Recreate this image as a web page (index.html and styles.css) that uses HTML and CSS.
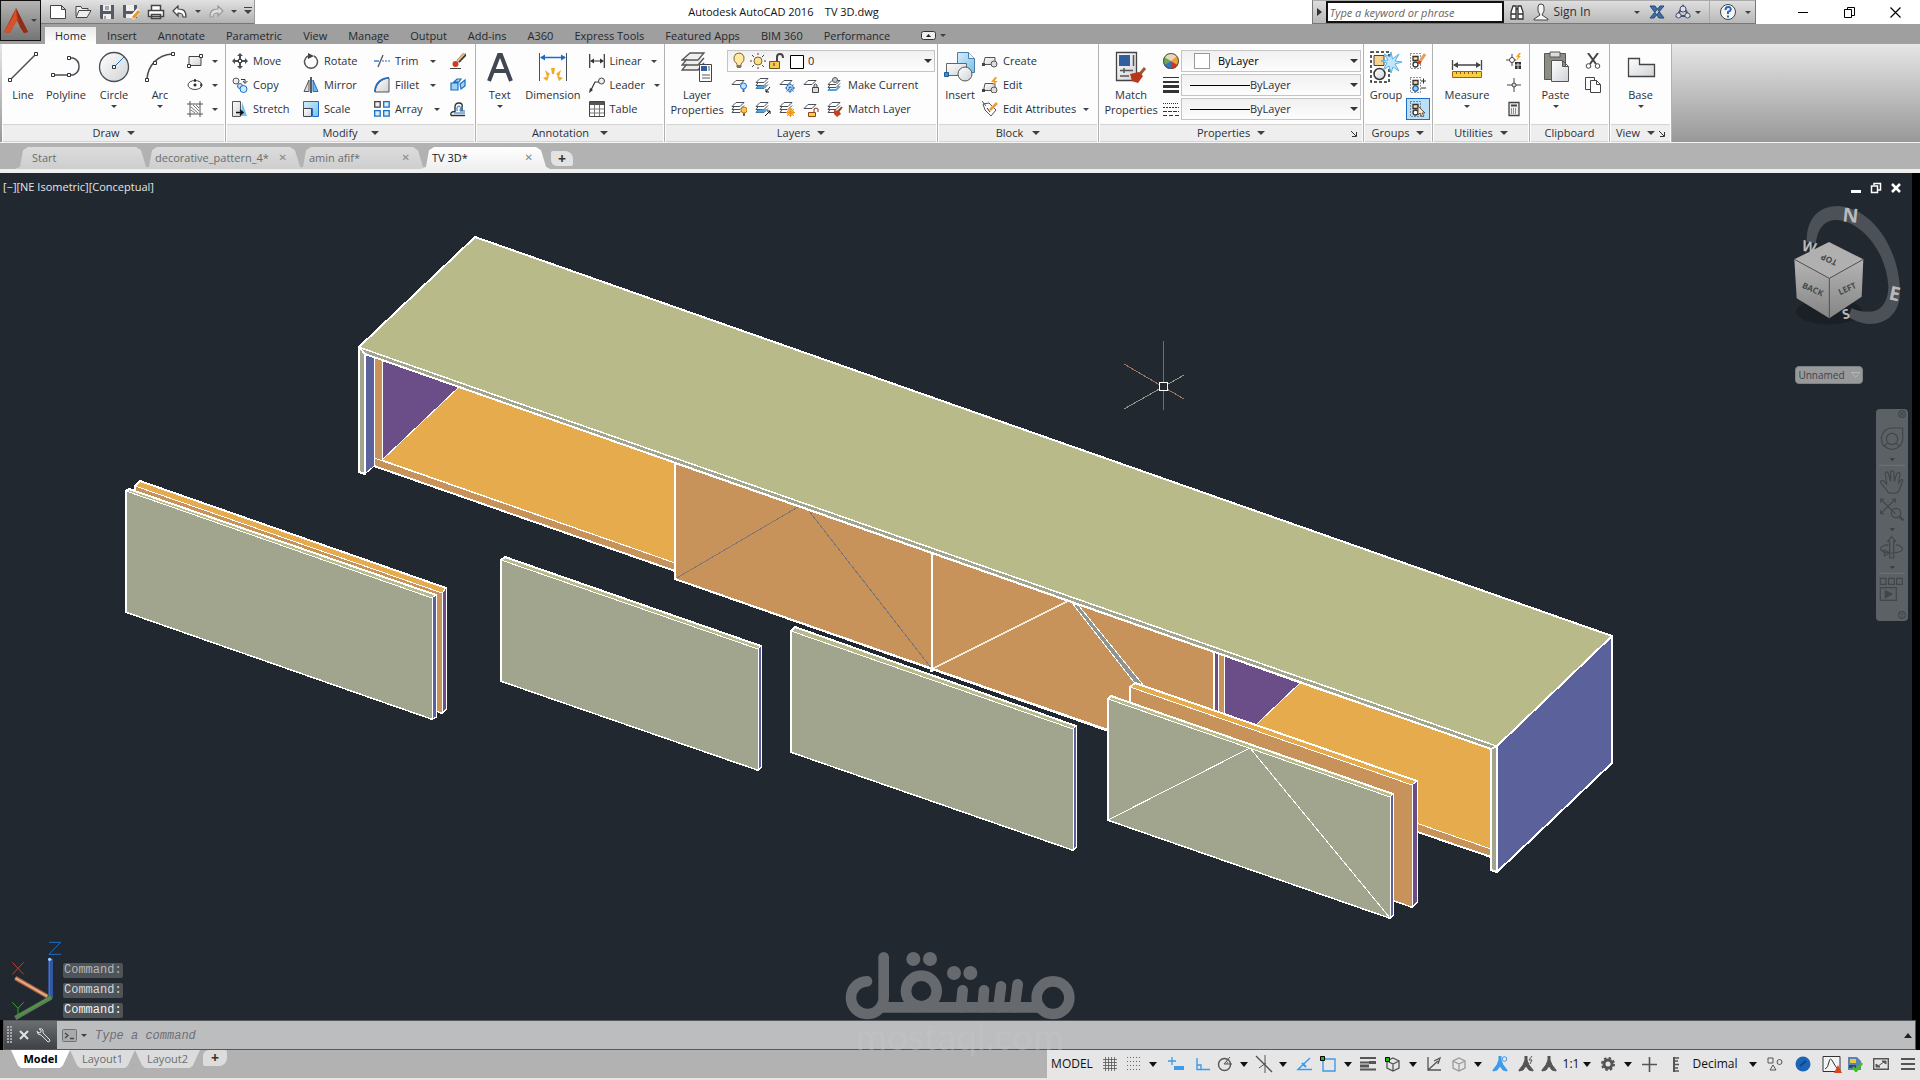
FILE: index.html
```html
<!DOCTYPE html>
<html lang="en">
<head>
<meta charset="utf-8">
<title>Autodesk AutoCAD 2016 - TV 3D.dwg</title>
<link rel="stylesheet" href="styles.css">
</head>
<body>
<svg class="defs" aria-hidden="true">
  <defs>
    <linearGradient id="g-metal" x1="0" y1="0" x2="1" y2="1"><stop offset="0" stop-color="#fff"/><stop offset="1" stop-color="#cfd2d6"/></linearGradient>
    <linearGradient id="g-blue" x1="0" y1="0" x2="1" y2="1"><stop offset="0" stop-color="#d5edfa"/><stop offset="1" stop-color="#7cc0ea"/></linearGradient>
    <symbol id="stack" viewBox="0 0 16 16"><path d="M5 1.500h8l-4 4H1zM3.500 5L1 8.500h8l4-4M3.500 8L1 11.500h8l4-4" fill="#fff" stroke="#4a4f57"/></symbol>
    <symbol id="sheet" viewBox="0 0 16 16"><path d="M5 3.500h8l-4 4H1z" fill="#fff" stroke="#4a4f57"/></symbol>
    <symbol id="groupbox" viewBox="0 0 16 16"><path d="M.5.500h10v15H.5z" fill="none" stroke="#333" stroke-dasharray="1 2"/><path d="M3 3.500h5v4H3z" fill="#fbdc9e" stroke="#333" stroke-width="1.300"/><circle cx="5.500" cy="11.500" r="2.500" fill="#fff" stroke="#333" stroke-width="1.300"/></symbol>
    <symbol id="block" viewBox="0 0 16 16"><path d="M3 4.500h10v7H1.500z" fill="url(#g-metal)" stroke="#555"/><circle cx="12" cy="11" r="3" fill="#ddd" stroke="#555"/><path d="M0 10h3v3H0z" fill="#444"/></symbol>
    <symbol id="compass" viewBox="0 0 16 16"><path d="M7 0h2v4l2 5 4 5v1l-4-1-3-4-3 4-4 1v-1l4-5 2-5z" fill="currentColor" stroke="currentColor"/></symbol>
    <symbol id="cube" viewBox="0 0 16 16"><path d="M8 2l6 3v7l-6 3-6-3V5zM2 5l6 3 6-3M8 8v7" fill="none" stroke="currentColor" stroke-width="1.300"/></symbol>
  </defs>
</svg>

<header class="top">
  <button class="app-button" aria-label="Application menu">
    <svg width="24" height="26" viewBox="0 0 24 26"><path d="M12 0L0 24l6 1 3-6h7l4 6 4-1z" fill="#b5381b"/><path d="M12 0L9 9 0 24l6 1 4-8 3-3z" fill="#d8502a"/><path d="M12 0l4 19 4 6 4-1z" fill="#8f2b18"/><path d="M9 19h7l-3-6z" fill="#8d8d8d"/></svg>
    <i class="arrow"></i>
  </button>
  <div class="title-bar">
    <div class="quick-access">
      <button aria-label="New"><svg width="18" height="16" viewBox="0 0 18 16"><path d="M1.500 1.500h11l4 4v9h-15zM12.500 1.500v4h4" fill="#fff" stroke="#444"/></svg></button>
      <button aria-label="Open"><svg width="18" height="16" viewBox="0 0 18 16"><path d="M2 12V2.500h5l1 2h6v2M2 13.500L5 6.500h12l-4 7z" fill="#eee" stroke="#444"/></svg></button>
      <button aria-label="Save"><svg width="16" height="16" viewBox="0 0 16 16"><path d="M1 1h14v14H2l-1-1z" fill="#555b64"/><path d="M4 1h8v6H4zM4 10h8v5H4z" fill="#eee"/><path d="M6 3h4M6 5h4M6 12v3" stroke="#555b64"/></svg></button>
      <button aria-label="Save As"><svg width="18" height="16" viewBox="0 0 18 16"><path d="M1 1h14v13H2l-1-1z" fill="#555b64"/><path d="M4 1h8v6H4zM4 10h8v4H4z" fill="#eee"/><path d="M17 6l-7 8" stroke="#fff" stroke-width="5"/><path d="M17 7l-6 7" stroke="#eb9a2a" stroke-width="3"/></svg></button>
      <button aria-label="Plot"><svg width="18" height="16" viewBox="0 0 18 16"><path d="M4.500 6V1.500h9V6M1.500 6.500h15v6h-15zM4.500 10.500h9v4h-9z" fill="#fff" stroke="#444" stroke-width="1.500"/></svg></button>
      <button aria-label="Undo"><svg width="16" height="14" viewBox="0 0 16 14"><path d="M1 6l5-5v3c6 0 8 2 8 8h-3c0-3-1-4-5-4v3z" fill="#fff" stroke="#444" stroke-width="1.200"/></svg></button>
      <i class="arrow"></i>
      <button aria-label="Redo"><svg width="16" height="14" viewBox="0 0 16 14"><path d="M15 6l-5-5v3C4 4 2 6 2 12h3c0-3 1-4 5-4v3z" fill="#ddd" stroke="#999" stroke-width="1.200"/></svg></button>
      <i class="arrow"></i>
      <i class="arrow wide bar"></i>
    </div>
    <div class="title">Autodesk AutoCAD 2016 &nbsp;&nbsp; TV 3D.dwg</div>
    <div class="info-center">
      <button class="expand" aria-label="Collapse search"><svg width="5" height="8" viewBox="0 0 5 8"><path d="M0 0l5 4-5 4z" fill="#333"/></svg></button>
      <input type="text" placeholder="Type a keyword or phrase" aria-label="Search">
      <button class="w24" aria-label="Find"><svg width="16" height="16" viewBox="0 0 16 16"><path d="M2 15V8l2-6h3v13zM9 15V2h3l2 6v7zM7 5h2M2 10h5M9 10h5" fill="#fff" stroke="#333" stroke-width="1.300"/></svg></button>
      <button class="sign"><svg width="16" height="18" viewBox="0 0 16 18"><path d="M5 8V4q0-3 3-3t3 3v4l-2 4 6 4v1H1v-1l6-4z" fill="#f5f5f5" stroke="#444"/></svg>Sign In<i class="arrow"></i></button>
      <button class="w24" aria-label="Exchange"><svg width="16" height="16" viewBox="0 0 16 16"><path d="M1 2h5l9 12h-5zM15 2h-4L1 14h4z" fill="#3b6eaf" stroke="#2b4a73"/></svg></button>
      <button class="w24" aria-label="A360"><svg width="16" height="16" viewBox="0 0 16 16"><path d="M8 2L2 12h12z" fill="none" stroke="#44546c" stroke-width="2"/><circle cx="8" cy="5" r="3" fill="#dde" stroke="#44546c"/><circle cx="3.500" cy="11.500" r="2.500" fill="#dde" stroke="#44546c"/><circle cx="12.500" cy="11.500" r="2.500" fill="#dde" stroke="#44546c"/></svg></button>
      <i class="arrow"></i>
      <button class="w32 ruled" aria-label="Help"><svg width="18" height="18" viewBox="0 0 18 18"><circle cx="9" cy="9" r="7.500" fill="#f5f5f5" stroke="#444"/><path d="M6.500 7q0-3 2.700-3t2.600 2.500Q11.500 8 9 9v2M9 12.500v2" fill="none" stroke="#2468b4" stroke-width="2"/></svg></button>
      <i class="arrow"></i>
    </div>
    <div class="window-buttons">
      <button aria-label="Minimize"><svg width="10" height="10" viewBox="0 0 10 10"><path d="M0 5.500h10" stroke="#000"/></svg></button>
      <button aria-label="Restore"><svg width="11" height="11" viewBox="0 0 11 11"><path d="M.5 2.500h7v8h-7zM3.500 2.500v-2h7v8h-3" fill="none" stroke="#000"/></svg></button>
      <button aria-label="Close"><svg width="11" height="11" viewBox="0 0 11 11"><path d="M.5.500l10 10M10.500.500l-10 10" stroke="#000" stroke-width="1.200"/></svg></button>
    </div>
  </div>
  <nav class="ribbon-tabs">
    <button class="active">Home</button><button>Insert</button><button>Annotate</button><button>Parametric</button><button>View</button><button>Manage</button><button>Output</button><button>Add-ins</button><button>A360</button><button>Express Tools</button><button>Featured Apps</button><button>BIM 360</button><button>Performance</button>
    <span class="minimize"><svg width="15" height="9" viewBox="0 0 15 9"><rect x=".5" y=".5" width="14" height="8" rx="2" fill="#eee" stroke="#333"/><path d="M5 6l2.500-3L10 6z" fill="#222"/></svg><i class="arrow"></i></span>
  </nav>
</header>

<main class="ribbon">
  <section class="panel p-draw">
    <div class="body">
      <button class="big w40"><svg width="32" height="32" viewBox="0 0 32 32"><path d="M4 28L28 4" stroke="#4a4f57" stroke-width="1.500"/><path d="M1.500 27.500h3v3h-3zM27.500 1.500h3v3h-3z" fill="#fff" stroke="#333"/></svg>Line</button>
      <button class="big w48"><svg width="32" height="32" viewBox="0 0 32 32"><path d="M2 24h17h4a9 9 0 0 0 0-17h-5" fill="none" stroke="#4a4f57" stroke-width="1.500"/><path d="M1.500 22.500h3v3h-3zM17.500 22.500h3v3h-3zM17.500 5.500h3v3h-3z" fill="#fff" stroke="#333"/></svg>Polyline</button>
      <button class="big w48"><svg width="32" height="32" viewBox="0 0 32 32"><circle cx="16" cy="16" r="14.500" fill="url(#g-metal)" stroke="#4a4f57" stroke-width="1.300"/><path d="M17 15l9-9" stroke="#1a6fc4"/><path d="M14.500 14.500h3v3h-3z" fill="#fff" stroke="#333"/></svg>Circle<i class="arrow"></i></button>
      <button class="big w44"><svg width="32" height="32" viewBox="0 0 32 32"><path d="M3 28C4 14 14 4 28 3" fill="none" stroke="#4a4f57" stroke-width="1.500"/><path d="M1.500 27.500h3v3h-3zM9.500 10.500h3v3h-3zM27.500 1.500h3v3h-3z" fill="#fff" stroke="#333"/></svg>Arc<i class="arrow"></i></button>
      <div class="rows">
        <button class="small" aria-label="Rectangle"><svg width="16" height="16" viewBox="0 0 16 16"><path d="M2 3.500h12v9H2z" fill="url(#g-metal)" stroke="#444"/><path d="M.5 11.500h3v3h-3zM12.500 1.500h3v3h-3z" fill="#fff" stroke="#333"/></svg><i class="arrow"></i></button>
        <button class="small" aria-label="Ellipse"><svg width="16" height="16" viewBox="0 0 16 16"><ellipse cx="8" cy="8" rx="7" ry="4.500" fill="#fff" stroke="#444"/><path d="M6.500 8h3M8 6.500v3M8 2v3M14 6.500v3" stroke="#222" stroke-width="1.500"/></svg><i class="arrow"></i></button>
        <button class="small" aria-label="Hatch"><svg width="16" height="16" viewBox="0 0 16 16"><path d="M3 0v16M13 0v16M0 3h16M0 13h16" stroke="#555"/><path d="M4 6l7 6M4 9l4 3M6 4l6 6M9 4l3 3" stroke="#777"/></svg><i class="arrow"></i></button>
      </div>
    </div>
    <footer>Draw<i class="arrow wide"></i></footer>
  </section>

  <section class="panel p-modify">
    <div class="body">
      <div class="rows w72">
        <button class="small"><svg width="16" height="16" viewBox="0 0 16 16"><path d="M8 0l3 3H5zM8 16l3-3H5zM0 8l3-3v6zM16 8l-3-3v6zM7 3h2v3H7zM7 10h2v3H7zM3 7h3v2H3zM10 7h3v2h-3z" fill="#4a4f57"/><path d="M6.500 6.500h3v3h-3z" fill="#fff" stroke="#333"/></svg>Move</button>
        <button class="small"><svg width="16" height="16" viewBox="0 0 16 16"><circle cx="4" cy="4" r="3" fill="#eee" stroke="#555"/><circle cx="8" cy="9" r="2.500" fill="#cde" stroke="#1a6fc4"/><circle cx="11.500" cy="12" r="3.500" fill="#cfe8f8" stroke="#1a6fc4"/><path d="M9 2.500h4v3M11 4l2 2.500L15.500 4" fill="none" stroke="#333"/></svg>Copy</button>
        <button class="small"><svg width="16" height="16" viewBox="0 0 16 16"><path d="M10 1l5 14H9z" fill="#7cc0ea"/><path d="M.5.500h8v15h-8z" fill="url(#g-metal)" stroke="#555"/><path d="M4 11.500h6M8 9l3 2.500L8 14" fill="none" stroke="#111" stroke-width="1.500"/></svg>Stretch</button>
      </div>
      <div class="rows w72">
        <button class="small"><svg width="16" height="16" viewBox="0 0 16 16"><path d="M5 3a6.500 6.500 0 1 0 6 0" fill="none" stroke="#555" stroke-width="1.500"/><path d="M5 0l6 3-6 3z" fill="#444"/></svg>Rotate</button>
        <button class="small"><svg width="16" height="16" viewBox="0 0 16 16"><path d="M6 3v11.500H1z" fill="#ddd" stroke="#555"/><path d="M10 3v11.500h5z" fill="#6db9ec" stroke="#1a6fc4"/><path d="M8 0v16" stroke="#222" stroke-width="1.500"/></svg>Mirror</button>
        <button class="small"><svg width="16" height="16" viewBox="0 0 16 16"><path d="M.5.500h15v15h-6v-8h-9z" fill="url(#g-blue)" stroke="#1a6fc4"/><path d="M.5 7.500h8v8h-8z" fill="url(#g-metal)" stroke="#444"/></svg>Scale</button>
      </div>
      <div class="rows w76">
        <button class="small"><svg width="16" height="16" viewBox="0 0 16 16"><path d="M0 8h5" stroke="#1a6fc4" stroke-width="1.300"/><path d="M8 8h8" stroke="#1a6fc4" stroke-dasharray="2 1"/><path d="M4 14L9 2" stroke="#555" stroke-width="1.300"/></svg>Trim<i class="arrow"></i></button>
        <button class="small"><svg width="16" height="16" viewBox="0 0 16 16"><path d="M15 1v14H1C2 7 7 2 15 1z" fill="url(#g-metal)" stroke="#555"/><path d="M.7 15C1 6 7 1 15 .700" fill="none" stroke="#1a6fc4" stroke-width="1.500"/></svg>Fillet<i class="arrow"></i></button>
        <button class="small"><svg width="16" height="16" viewBox="0 0 16 16"><path d="M.7.700h5.500v5.500H.7z" fill="#eee" stroke="#444" stroke-width="1.300"/><path d="M9.700.700h5.500v5.500H9.700zM.7 9.700h5.500v5.500H.7zM9.700 9.700h5.500v5.500H9.700z" fill="#d5edfa" stroke="#1a6fc4" stroke-width="1.300"/></svg>Array<i class="arrow"></i></button>
      </div>
      <div class="rows">
        <button class="small" aria-label="Erase"><svg width="16" height="16" viewBox="0 0 16 16"><path d="M0 15.500h11" stroke="#444"/><path d="M15.500.500L8 8.500" stroke="#333" stroke-width="4"/><path d="M15 0L7.500 8" stroke="#f0c088" stroke-width="2"/><circle cx="5.500" cy="11" r="3" fill="#c8401c"/></svg></button>
        <button class="small" aria-label="Explode"><svg width="16" height="16" viewBox="0 0 16 16"><path d="M1 6h7v7H1zM4 5l3-3h4L9 5zM10 7l5-4v6l-4 3z" fill="#9fd2f2" stroke="#1a6fc4" stroke-width="1.200"/></svg></button>
        <button class="small" aria-label="Offset"><svg width="16" height="16" viewBox="0 0 16 16"><path d="M1 14.500h14M1 14.500q-1-4 4-4V6q0-4 4-4t3 4v4" fill="none" stroke="#333" stroke-width="1.400"/><path d="M4 12h11M7 10V7q0-2 2-2t1 5h5" fill="none" stroke="#1a6fc4"/></svg></button>
      </div>
    </div>
    <footer>Modify<i class="arrow wide"></i></footer>
  </section>

  <section class="panel p-annotation">
    <div class="body">
      <button class="big w44"><svg width="32" height="32" viewBox="0 0 32 32"><path d="M5 30L15 4h2l10 26M9 20h14" fill="none" stroke="#414750" stroke-width="4"/></svg>Text<i class="arrow"></i></button>
      <button class="big w64"><svg width="32" height="32" viewBox="0 0 32 32"><path d="M2.500 2v28M29.500 2v28" stroke="#4a4f57"/><path d="M4 6.500h24" stroke="#1a6fc4" stroke-width="1.500"/><path d="M3 6.500l5-3v6zM29 6.500l-5-3v6z" fill="#1a6fc4"/><g fill="#f2aa2c"><path d="M14 17h4l-1 6h-2zM8 19l5 4-3 3zM24 19l-5 4 3 3zM6 27l6-2-2 5zM26 27l-6-2 2 5z"/></g></svg>Dimension</button>
      <div class="rows">
        <button class="small"><svg width="16" height="16" viewBox="0 0 16 16"><path d="M.7 1v14M15.300 1v14M2 8h12" stroke="#333" stroke-width="1.200"/><path d="M1 8l4-2.500v5zM15 8l-4-2.500v5z" fill="#333"/></svg>Linear<i class="arrow"></i></button>
        <button class="small"><svg width="16" height="16" viewBox="0 0 16 16"><path d="M2 13l4-8h4" fill="none" stroke="#333" stroke-width="1.200"/><path d="M0 16l1-5 3 2z" fill="#333"/><circle cx="12.500" cy="4" r="3" fill="#eee" stroke="#444"/></svg>Leader<i class="arrow"></i></button>
        <button class="small"><svg width="16" height="16" viewBox="0 0 16 16"><path d="M.5.500h15v15H.5z" fill="#fff" stroke="#444"/><path d="M1 1h14v3H1z" fill="#555"/><path d="M1 8h14M1 12h14M5.500 4v11M10.500 4v11" stroke="#777"/></svg>Table</button>
      </div>
    </div>
    <footer>Annotation<i class="arrow wide"></i></footer>
  </section>

  <section class="panel p-layers">
    <div class="body">
      <button class="big w60"><svg width="32" height="32" viewBox="0 0 32 32"><path d="M9 2h14l-6 7H1zM6 8l-5 6h16l6-7M6 13l-5 6h16l6-7" fill="#eee" stroke="#555" stroke-width="1.300"/><path d="M18.500 13.500h12v17h-12z" fill="#fff" stroke="#444"/><path d="M20 15h6v5h-6z" fill="#2f5f9f"/><path d="M28 15v5M21 24h8M21 27h8" stroke="#555"/></svg><span>Layer<br>Properties</span></button>
      <div class="rows">
        <label class="combo layer-combo">
          <svg width="72" height="18" viewBox="0 0 72 18"><path d="M5 12Q1 9 2 5t5-4q4 0 5 4 1 4-3 7v3H5z" fill="#ffe9a5" stroke="#8a6a2c"/><path d="M5 13h4v3H5z" fill="#777"/><circle cx="26" cy="9" r="4" fill="#ffe08a" stroke="#7a6330"/><path d="M26 1v2M26 15v2M18 9h2M32 9h2M20 3l2 2M30 13l2 2M32 3l-2 2M22 13l-2 2" stroke="#444"/><path d="M37.500 9.500h10v7h-10z" fill="#f8c950" stroke="#6f5320"/><path d="M45 9V5q0-3 3-3t3 4" fill="none" stroke="#444" stroke-width="2"/><path d="M42 11v3" stroke="#333"/><path d="M58.500 3.500h13v13h-13z" fill="#fff" stroke="#000"/></svg>
          <select aria-label="Layer"><option>0</option></select>
        </label>
        <div class="icon-row">
          <button aria-label="Off"><svg width="16" height="16" viewBox="0 0 16 16"><use href="#sheet"/><circle cx="12.500" cy="9" r="3" fill="#bfe3f8" stroke="#1a6fc4"/><path d="M11.500 12h2v3h-2z" fill="#666"/></svg></button>
          <button aria-label="Isolate"><svg width="16" height="16" viewBox="0 0 16 16"><use href="#stack"/><path d="M3 9l-2 2.500h8L12 8z" fill="#4aa6e6"/><path d="M15 10l-4 5M11 12v3h3" stroke="#111" fill="none"/></svg></button>
          <button aria-label="Freeze"><svg width="16" height="16" viewBox="0 0 16 16"><use href="#sheet"/><circle cx="11" cy="11" r="3.500" fill="#fff" stroke="#1a6fc4"/><path d="M11 6v10M6 11h10M7.500 7.500l7 7M14.500 7.500l-7 7" stroke="#1a6fc4" stroke-dasharray="2 1"/></svg></button>
          <button aria-label="Lock"><svg width="16" height="16" viewBox="0 0 16 16"><use href="#sheet"/><path d="M9.500 10.500h6v5h-6zM11 10V8q1.500-2 3 0v2" fill="#ddd" stroke="#444"/></svg></button>
          <button class="small"><svg width="16" height="16" viewBox="0 0 16 16"><use href="#stack" y="2"/><path d="M2 12l-1 2h8l4-5h-2l-2 3z" fill="#4aa6e6"/><circle cx="8" cy="3" r="2.500" fill="#ccc" stroke="#555"/></svg>Make Current</button>
        </div>
        <div class="icon-row">
          <button aria-label="On"><svg width="16" height="16" viewBox="0 0 16 16"><use href="#stack"/><circle cx="13" cy="9" r="3" fill="#ffc24a" stroke="#c07a12"/><path d="M12 12h2v3h-2z" fill="#666"/></svg></button>
          <button aria-label="Unisolate"><svg width="16" height="16" viewBox="0 0 16 16"><use href="#stack"/><path d="M3 9l-2 2.500h8L12 8z" fill="#4aa6e6"/><path d="M10 15l5-5M12 10h3v3" stroke="#111" fill="none"/></svg></button>
          <button aria-label="Thaw"><svg width="16" height="16" viewBox="0 0 16 16"><use href="#stack"/><circle cx="11.500" cy="11.500" r="3" fill="#ffd060" stroke="#e08c1c"/><path d="M11.500 7v9M7 11.500h9M8 8l7 7M15 8l-7 7" stroke="#e99a20"/></svg></button>
          <button aria-label="Unlock"><svg width="16" height="16" viewBox="0 0 16 16"><use href="#sheet"/><path d="M5.500 11.500h7v4h-7z" fill="#ffc850" stroke="#8a4a18"/><path d="M11 11V8q2-2 4 0v3" fill="none" stroke="#8a2a18"/></svg></button>
          <button class="small"><svg width="16" height="16" viewBox="0 0 16 16"><use href="#stack"/><path d="M15 6l-4 5" stroke="#8a4a28" stroke-width="2"/><path d="M7 9l5 1 2 3-4 3-3-3z" fill="#c8401c"/></svg>Match Layer</button>
        </div>
      </div>
    </div>
    <footer>Layers<i class="arrow wide"></i></footer>
  </section>

  <section class="panel p-block">
    <div class="body">
      <button class="big w40"><svg width="32" height="32" viewBox="0 0 32 32"><path d="M13.500 1.500h11l6 6v14h-17z" fill="url(#g-blue)" stroke="#4c7ea5"/><path d="M24.500 1.500v6h6" fill="#e6f4fc" stroke="#4c7ea5"/><path d="M2.500 12.500h20v12h-20z" fill="url(#g-metal)" stroke="#666"/><circle cx="21" cy="23" r="7" fill="url(#g-metal)" stroke="#555"/><path d="M.5 21.500h4v4h-4z" fill="#3b8fd0" stroke="#1b5c96"/></svg>Insert</button>
      <div class="rows">
        <button class="small"><svg width="16" height="16" viewBox="0 0 16 16"><use href="#block"/></svg>Create</button>
        <button class="small"><svg width="16" height="16" viewBox="0 0 16 16"><use href="#block" y="2"/><path d="M13 0l-4 5h3l-2 4 6-5h-3l2-4z" fill="#f6a31c"/></svg>Edit</button>
        <button class="small"><svg width="16" height="16" viewBox="0 0 16 16"><path d="M1 3l6-1 7 7-5 6-6-6zM0 0l4 5" fill="#fff" stroke="#555"/><path d="M15 2L8 9" stroke="#e99a3a" stroke-width="2.500"/><path d="M5 7l3 4" stroke="#333"/></svg>Edit Attributes<i class="arrow"></i></button>
      </div>
    </div>
    <footer>Block<i class="arrow wide"></i></footer>
  </section>

  <section class="panel p-properties">
    <div class="body">
      <button class="big w60"><svg width="32" height="32" viewBox="0 0 32 32"><path d="M1.500 1.500h20v28h-20z" fill="url(#g-metal)" stroke="#444" stroke-width="1.300"/><path d="M4 4h11v11H4z" fill="#2f5f9f"/><path d="M18.500 4v11M5 19.500h13M9 17v5M5 25h9" stroke="#555" stroke-width="1.500"/><path d="M30 17l-5 6" stroke="#9a5a34" stroke-width="3"/><path d="M15 23l9-2 4 4-5 7-6-2z" fill="#b9361b"/></svg><span>Match<br>Properties</span></button>
      <div class="rows icons">
        <button class="small" aria-label="Colour"><svg width="16" height="16" viewBox="0 0 16 16"><path d="M8 8L8 0A8 8 0 0 1 15 12z" fill="#e9a33a"/><path d="M8 8l7 4A8 8 0 0 1 1 12z" fill="#c83a22"/><path d="M8 8L1 12A8 8 0 0 1 8 0z" fill="#6aa84f"/><path d="M8 8v8A8 8 0 0 1 1 12z" fill="#2f79c4"/><path d="M8 8L1 4a8 8 0 0 1 13-1z" fill="#e7d9b8"/><circle cx="8" cy="8" r="7.500" fill="none" stroke="#555"/></svg></button>
        <button class="small" aria-label="Lineweight"><svg width="16" height="16" viewBox="0 0 16 16"><path d="M0 .500h16" stroke="#333"/><path d="M0 5h16" stroke="#333" stroke-width="2"/><path d="M0 9.500h16M0 14.500h16" stroke="#333" stroke-width="3"/></svg></button>
        <button class="small" aria-label="Linetype"><svg width="16" height="16" viewBox="0 0 16 16"><path d="M0 2.500h16" stroke="#333" stroke-dasharray="1 1"/><path d="M0 6.500h16" stroke="#333" stroke-dasharray="2 1"/><path d="M0 10.500h16" stroke="#333" stroke-dasharray="4 1"/><path d="M0 14.500h16" stroke="#333" stroke-dasharray="4 2"/></svg></button>
      </div>
      <div class="rows combos">
        <label class="combo color-combo"><span class="swatch"></span><select aria-label="Object colour"><option>ByLayer</option></select></label>
        <label class="combo line-combo"><span class="line"></span><select aria-label="Lineweight"><option>ByLayer</option></select></label>
        <label class="combo line-combo"><span class="line"></span><select aria-label="Linetype"><option>ByLayer</option></select></label>
      </div>
    </div>
    <footer>Properties<i class="arrow wide"></i><svg class="launcher" width="6" height="6" viewBox="0 0 6 6"><path d="M0 0l5 5M5.500 1v4.500H1" fill="none" stroke="#333"/></svg></footer>
  </section>

  <section class="panel p-groups">
    <div class="body">
      <button class="big w40"><svg width="32" height="32" viewBox="0 0 32 32"><path d="M1 1h18v30H1z" fill="none" stroke="#222" stroke-width="1.500" stroke-dasharray="3 2"/><path d="M4 4.500h10v10H4z" fill="#fbd391" stroke="#444"/><circle cx="9.500" cy="23" r="5.500" fill="url(#g-metal)" stroke="#333" stroke-width="1.500"/><path d="M21 1l1.500 7L29 3l-4 7 7 1-7 2 4 7-6-4-2 6-2-7-6 4 4-7-6-2 7-1-4-6 6 3z" fill="#bfe6fb" stroke="#58aee2"/></svg>Group</button>
      <div class="rows">
        <button class="small" aria-label="Ungroup"><svg width="16" height="16" viewBox="0 0 16 16"><use href="#groupbox"/><path d="M15 1l-6 9" stroke="#e0a060" stroke-width="3"/><path d="M10 8l-1 3" stroke="#c8401c" stroke-width="3"/></svg></button>
        <button class="small" aria-label="Group edit"><svg width="16" height="16" viewBox="0 0 16 16"><use href="#groupbox"/><circle cx="5.500" cy="11.500" r="2.500" fill="#8fd0f5" stroke="#1a6fc4"/><path d="M11 4h5M13.500 1.500v5M11 11h5" stroke="#333"/></svg></button>
        <button class="small pressed" aria-label="Group selection on"><svg width="16" height="16" viewBox="0 0 16 16"><use href="#groupbox"/><path d="M8 5v9l2-2 2 4 2-1-2-3h3z" fill="#ffe6b0" stroke="#555"/></svg></button>
      </div>
    </div>
    <footer>Groups<i class="arrow wide"></i></footer>
  </section>

  <section class="panel p-utilities">
    <div class="body">
      <button class="big w64"><svg width="32" height="32" viewBox="0 0 32 32"><path d="M1.500 9v10M30.500 9v10M3 14h26" stroke="#444" stroke-width="1.300"/><path d="M2 14l5-3v6zM30 14l-5-3v6z" fill="#444"/><path d="M1.500 20.500h29v6h-29z" fill="#f7cf3c" stroke="#b0571c"/><path d="M5.500 21v2M9.500 21v2M13.500 21v2M17.500 21v2M21.500 21v2M25.500 21v2" stroke="#8a5a1c"/></svg>Measure<i class="arrow"></i></button>
      <div class="rows">
        <button class="small" aria-label="Quick select"><svg width="16" height="16" viewBox="0 0 16 16"><path d="M0 7h10M6 1v12" stroke="#444"/><circle cx="6" cy="7" r="2.500" fill="#fff" stroke="#444"/><path d="M13 0l-3 4h2l-2 4 5-5h-2l2-3z" fill="#f6a31c"/><path d="M9 9h6v7H9z" fill="#333"/><path d="M12 10v6M9 12h6" stroke="#ddd"/></svg></button>
        <button class="small" aria-label="ID point"><svg width="16" height="16" viewBox="0 0 16 16"><path d="M1 8h14M8 1v14" stroke="#444"/><circle cx="8" cy="8" r="2" fill="#ddd" stroke="#444"/></svg></button>
        <button class="small" aria-label="Calculator"><svg width="16" height="16" viewBox="0 0 16 16"><path d="M3 1.500h10v13H3z" fill="#eee" stroke="#444" stroke-width="1.300"/><path d="M5 4.500h6" stroke="#444" stroke-width="2"/><path d="M5 8h6M5 10h6M5 12h6" stroke="#333" stroke-dasharray="1 1"/></svg></button>
      </div>
    </div>
    <footer>Utilities<i class="arrow wide"></i></footer>
  </section>

  <section class="panel p-clipboard">
    <div class="body">
      <button class="big w48"><svg width="32" height="32" viewBox="0 0 32 32"><path d="M4.500 2.500h21v26h-21z" fill="#8b8f86" stroke="#555"/><path d="M10 1h10v5H10z" fill="#ddd" stroke="#555"/><path d="M11.500 9.500h11l6 6v15h-17zM22.500 9.500v6h6" fill="url(#g-metal)" stroke="#555"/></svg>Paste<i class="arrow"></i></button>
      <div class="rows">
        <button class="small" aria-label="Cut"><svg width="16" height="16" viewBox="0 0 16 16"><path d="M3 0l8 11M13 0L5 11" stroke="#444" stroke-width="2"/><circle cx="3.500" cy="13" r="2.300" fill="#fff" stroke="#444"/><circle cx="12.500" cy="13" r="2.300" fill="#fff" stroke="#444"/></svg></button>
        <button class="small" aria-label="Copy clip"><svg width="16" height="16" viewBox="0 0 16 16"><path d="M.5.500h9v12h-9z" fill="#fff" stroke="#444"/><path d="M5.500 3.500h6l4 4v8h-10zM11.500 3.500v4h4" fill="#fff" stroke="#444"/></svg></button>
      </div>
    </div>
    <footer>Clipboard</footer>
  </section>

  <section class="panel p-view">
    <div class="body">
      <button class="big w60"><svg width="32" height="32" viewBox="0 0 32 32"><path d="M3.500 7.500h11v6h15v12h-26z" fill="url(#g-metal)" stroke="#444" stroke-width="1.300"/></svg>Base<i class="arrow"></i></button>
    </div>
    <footer>View<i class="arrow wide"></i><svg class="launcher" width="6" height="6" viewBox="0 0 6 6"><path d="M0 0l5 5M5.500 1v4.500H1" fill="none" stroke="#333"/></svg></footer>
  </section>
</main>

<nav class="file-tabs">
  <button class="tab-start">Start</button>
  <button class="tab-long">decorative_pattern_4*<i class="x">✕</i></button>
  <button class="tab">amin afif*<i class="x">✕</i></button>
  <button class="tab active">TV 3D*<i class="x">✕</i></button>
  <button class="plus" aria-label="New tab">+</button>
</nav>

<section class="viewport">
  <svg class="scene" viewBox="0 173 1912 847" preserveAspectRatio="xMinYMin meet" shape-rendering="crispEdges">
    <g stroke="#fff" stroke-width="2" stroke-linejoin="round">
      <!-- cabinet interior -->
      <path d="M374 357L1491 749V857L1418 832L374 466z" fill="#c8935b" stroke="none"/>
      <path d="M382 360L459 387L382 460z" fill="#6b4e87" stroke="none"/>
      <path d="M459 387L675 463V563L382 460z" fill="#e5ab4d" stroke-width="1"/>
      <path d="M374 458L675 563" stroke-width="1"/>
      <path d="M374 466L675 571" fill="none"/>
      <path d="M374 357V466M382 360V460" stroke-width="1"/>
      <path d="M675 463L1214 652V768L675 579z" fill="#c8935b"/>
      <path d="M1214 652L1224 656V740H1214z" fill="#c8935b" stroke="none"/>
      <path d="M1214 652L1218 654V740H1214z" fill="#6b4e87" stroke-width="1"/>
      <path d="M1224 656L1300 683L1240 740H1224z" fill="#6b4e87" stroke-width="1"/>
      <path d="M1300 683L1491 749V849L1240 762V740z" fill="#e5ab4d" stroke-width="1"/>
      <path d="M1400 826L1491 857" fill="none"/>
      <path d="M675 579L798 507M809 511L932 669" stroke="#7d7674" stroke-width="1"/>
      <path d="M932 553V669"/>
      <path d="M932 669L1068 601" stroke="#f6ead9" stroke-width="2"/>
      <path d="M1072 603L1079 606L1144 686H1137z" fill="#8f9490" stroke-width="1"/>
      <circle cx="932" cy="670" r="2" fill="#fff" stroke="none"/>
      <!-- carcass -->
      <path d="M359 347L365 354V474L359 472z" fill="#a1a58d"/>
      <path d="M365 354L374 357V466L365 474z" fill="#5b629b" stroke-width="1"/>
      <path d="M359 347L1497 746L1491 749L365 354z" fill="#a1a58d"/>
      <path d="M475 237L1612 636L1497 746L359 347z" fill="#b8ba89" stroke="none"/>
      <path d="M359 347L1497 746" stroke-width="1"/>
      <path d="M359 347L475 237L1612 636L1497 746" fill="none"/>
      <path d="M1491 749L1497 746V872L1491 870z" fill="#a1a58d"/>
      <path d="M1497 746L1612 636V763L1497 872z" fill="#5b629b"/>
      <!-- left door pair -->
      <path d="M135 486L140 481L446 588V709L442 713L135 606z" fill="#e5ab4d"/>
      <path d="M135 486L442 593V713L135 606z" fill="#c8935b" stroke-width="1"/>
      <path d="M442 593L446 588V709L442 713z" fill="#6b4e87" stroke-width="1"/>
      <path d="M126 491L129 489L436 595V717L432 719L126 612z" fill="#b8ba89"/>
      <path d="M126 491L432 598V719L126 612z" fill="#a1a58d" stroke-width="1"/>
      <path d="M432 598L436 595V717L432 719z" fill="#5b629b" stroke-width="1"/>
      <!-- middle doors -->
      <path d="M501 560L505 557L761 646V767L758 770L501 681z" fill="#b8ba89"/>
      <path d="M501 560L758 649V770L501 681z" fill="#a1a58d" stroke-width="1"/>
      <path d="M758 649L761 646V767L758 770z" fill="#5b629b" stroke-width="1"/>
      <path d="M675 579L1108 730" fill="none"/>
      <path d="M791 631L795 627L1076 726V847L1073 850L791 752z" fill="#b8ba89"/>
      <path d="M791 631L1073 729V850L791 752z" fill="#a1a58d" stroke-width="1"/>
      <path d="M1073 729L1076 726V847L1073 850z" fill="#5b629b" stroke-width="1"/>
      <!-- right door pair -->
      <path d="M1130 687L1135 683L1417 781V902L1412 907L1130 807z" fill="#e5ab4d"/>
      <path d="M1130 687L1412 785V907L1130 807z" fill="#c8935b" stroke-width="1"/>
      <path d="M1412 785L1417 781V902L1412 907z" fill="#6b4e87" stroke-width="1"/>
      <path d="M1108 699L1111 696L1393 794V915L1390 918L1108 820z" fill="#b8ba89"/>
      <path d="M1108 699L1390 797V918L1108 820z" fill="#a1a58d" stroke-width="1"/>
      <path d="M1390 797L1393 794V915L1390 918z" fill="#5b629b" stroke-width="1"/>
      <path d="M1108 820L1250 748L1390 918" fill="none" stroke-width="1"/>
    </g>
    <g fill="none">
      <path d="M1163.500 341V410" stroke="#2f7fb8"/>
      <path d="M1124 364L1184 399" stroke="#9a7560"/>
      <path d="M1124 409L1184 375" stroke="#8c9a8a"/>
      <path d="M1159.500 382.500h8v8h-8z" fill="#212830" stroke="#fff"/>
    </g>
  </svg>

  <div class="view-label">[−][NE Isometric][Conceptual]</div>
  <div class="view-buttons">
    <button aria-label="Minimize drawing"><svg width="12" height="12" viewBox="0 0 12 12"><path d="M1 9.500h10" stroke="#fff" stroke-width="3"/></svg></button>
    <button aria-label="Restore drawing"><svg width="12" height="12" viewBox="0 0 12 12"><path d="M1.500 4h6v6.500h-6zM4 3V1.500h6.500V8H8" fill="none" stroke="#fff" stroke-width="1.500"/></svg></button>
    <button aria-label="Close drawing"><svg width="12" height="12" viewBox="0 0 12 12"><path d="M2 2l8 8M10 2l-8 8" stroke="#fff" stroke-width="2.500"/></svg></button>
  </div>

  <svg class="view-cube" width="120" height="140" viewBox="150 90 360 420">
    <defs><linearGradient id="g-face" x1="0" y1="0" x2="0" y2="1"><stop offset="0" stop-color="#b4b4b4"/><stop offset="1" stop-color="#858585"/></linearGradient></defs>
    <ellipse cx="268" cy="425" rx="100" ry="38" fill="#1b2027"/>
    <path d="M200 215C200 140 240 108 295 108C400 115 480 240 480 370C478 430 440 462 390 462C360 460 340 450 325 440L335 415C355 425 375 425 390 425C420 424 444 400 445 350C440 250 370 155 290 150C250 150 232 180 228 220z" fill="#4b5157"/>
    <g fill="#b9babb" class="cube-text">
      <text x="308" y="156" font-size="58" transform="rotate(6 330 135)">N</text>
      <text x="186" y="246" font-size="44" transform="rotate(14 205 230)">W</text>
      <text x="448" y="392" font-size="58" transform="rotate(12 466 370)">E</text>
      <text x="306" y="446" font-size="40" transform="rotate(-14 318 430)">S</text>
    </g>
    <path d="M267 216L370 268L268 325L163 268z" fill="#b0b0b0"/>
    <path d="M163 268L268 325V445L170 385z" fill="url(#g-face)"/>
    <path d="M370 268L365 380L268 445V325z" fill="url(#g-face)"/>
    <path d="M163 268L268 325L370 268M268 325V445" fill="none" stroke="#555" stroke-width="3"/>
    <g fill="#45484c" class="cube-text" font-size="25">
      <text x="184" y="366" transform="rotate(24 216 360)">BACK</text>
      <text x="295" y="366" transform="rotate(-25 320 360)">LEFT</text>
      <text x="240" y="276" transform="rotate(205 266 268)">TOP</text>
    </g>
  </svg>
  <button class="ucs-name">Unnamed<svg width="9" height="6" viewBox="0 0 9 6"><path d="M.5.500h8l-4 5z" fill="none" stroke="#b4b6b8"/></svg></button>

  <div class="nav-bar">
    <svg width="32" height="212" viewBox="408 717 96 636" fill="none" stroke="#41464b" stroke-width="3.500">
      <circle cx="486" cy="732" r="10"/><path d="M481 727l10 10M491 727l-10 10"/>
      <path d="M455 774h33v33a32 32 0 1 1-33-33z"/><circle cx="456" cy="807" r="17"/><path d="M442 820l-10 9M469 820l10 9"/>
      <path d="M449 865h16l-8 8zM449 1075h16l-8 8zM449 1189h16l-8 8z" fill="#363b40" stroke="none"/>
      <path d="M417 886h78M417 1210h78" stroke="#767b80" stroke-width="2"/>
      <path d="M440 960l-18-22q-2-8 8-6l10 10-4-32q2-8 8-2l8 26v-28q4-8 10 0l1 28 8-24q6-6 9 1l-4 28 8-10q6-2 4 5l-10 25q-6 16-34 8z"/>
      <path d="M422 987l44 44M466 987l-44 44M422 998v-11h11M455 987h11v11M422 1020v11h11"/><circle cx="468" cy="1029" r="14"/><path d="M478 1040l12 11" stroke-width="7"/>
      <path d="M449 1164v-50h-6l12-14 12 14h-6v50zM445 1124q-24 4-24 13 4 12 38 12 28-2 29-12-4-10-20-13M432 1140l16 8-14 10z"/>
      <path d="M421 1225h17v18h-17zM446 1225h17v18h-17zM470 1225h17v18h-17zM421 1253h48v38h-48z"/><path d="M436 1262l20 10-20 11z" fill="#41464b"/>
      <circle cx="486" cy="1335" r="10"/><path d="M481 1332h10M483 1338h6"/>
    </svg>
  </div>

  <svg class="ucs-icon" width="70" height="80" viewBox="0 60 210 240">
    <path d="M152 116V234" stroke="#2f57a4" stroke-width="14"/><path d="M148 116V230" stroke="#5878c4" stroke-width="3"/><circle cx="149" cy="118" r="5" fill="#9fd0ff"/>
    <path d="M46 294L154 232" stroke="#5f7a5c" stroke-width="13"/><path d="M60 284L154 231" stroke="#35b81e" stroke-width="4" stroke-dasharray="5 3"/>
    <path d="M46 174L142 229" stroke="#a8604a" stroke-width="13"/><path d="M46 174L142 229" stroke="#e8b07c" stroke-width="6"/>
    <g fill="none" stroke-width="3"><path d="M37 127L71 163M71 127L37 163" stroke="#c8401c"/><path d="M37 247L54 265L71 247M54 265V284" stroke="#22b414"/><path d="M147 67H182L147 103H183" stroke="#1a6fc4"/></g>
  </svg>
  <div class="history"><span>Command:</span><span>Command:</span><span>Command:</span></div>
</section>

<div class="command-line">
  <div class="tools">
    <svg width="5" height="18" viewBox="0 0 5 18"><path d="M1 0v18M4 0v18" stroke="#a5a7aa" stroke-width="2" stroke-dasharray="2 1"/></svg>
    <button aria-label="Close command line"><svg width="10" height="10" viewBox="0 0 10 10"><path d="M1 1l8 8M9 1L1 9" stroke="#e2e2e2" stroke-width="2"/></svg></button>
    <button aria-label="Customize"><svg width="15" height="15" viewBox="0 0 15 15"><path d="M1 3l2 2 2-1V2L3 1q3-1 4 1v3l7 7q0 2-2 2L5 7Q1 7 1 3z" fill="#55585c" stroke="#ddd"/></svg></button>
  </div>
  <label class="prompt">
    <svg width="15" height="13" viewBox="0 0 15 13"><rect x=".5" y=".5" width="14" height="12" rx="1" fill="#a8aaac" stroke="#6f7275"/><path d="M3 4l3 2.500L3 9M8 9.500h4" fill="none" stroke="#44474b" stroke-width="1.300"/></svg>
    <i class="arrow"></i>
    <input type="text" placeholder="Type a command" aria-label="Command">
    <svg width="8" height="5" viewBox="0 0 8 5"><path d="M0 5l4-5 4 5z" fill="#222"/></svg>
  </label>
</div>

<footer class="bottom">
  <nav class="layout-tabs"><button class="active">Model</button><button>Layout1</button><button>Layout2</button><button class="plus" aria-label="New layout">+</button></nav>
  <div class="status">
    <button>MODEL</button>
    <button aria-label="Grid"><svg width="14" height="14" viewBox="0 0 14 14"><path d="M2.500 0v14M5.500 0v14M8.500 0v14M11.500 0v14M0 2.500h14M0 5.500h14M0 8.500h14M0 11.500h14" stroke="#555" stroke-width=".8"/></svg></button>
    <button aria-label="Snap"><svg width="14" height="14" viewBox="0 0 14 14"><path d="M0 .500h14M0 4.500h14M0 8.500h14M0 12.500h14" stroke="#666" stroke-dasharray="1 2"/></svg></button>
    <i class="arrow"></i>
    <button class="on" aria-label="Dynamic input"><svg width="16" height="14" viewBox="0 0 16 14"><path d="M0 4h8M4 0v8" stroke="currentColor" stroke-width="1.300"/><path d="M6 9h10v4H6z" fill="currentColor"/></svg></button>
    <button class="on" aria-label="Ortho"><svg width="14" height="14" viewBox="0 0 14 14"><path d="M1 1v11.500h13M1 8h4v4" fill="none" stroke="currentColor" stroke-width="1.400"/></svg></button>
    <button aria-label="Polar"><svg width="16" height="16" viewBox="0 0 16 16"><circle cx="7.500" cy="8.500" r="6" fill="none" stroke="currentColor" stroke-width="1.400"/><path d="M15 8H7l6-7M9 5q2 1 1 3" fill="none" stroke="currentColor"/></svg></button>
    <i class="arrow"></i>
    <button aria-label="Isometric drafting"><svg width="18" height="18" viewBox="0 0 18 18"><path d="M1 1l16 16" stroke="currentColor" stroke-width="1.400"/><path d="M10 0v18M4 13l7-5" stroke="currentColor"/></svg></button>
    <i class="arrow"></i>
    <button class="on" aria-label="Tracking"><svg width="16" height="14" viewBox="0 0 16 14"><path d="M14 1L2 12.500h14" fill="none" stroke="currentColor" stroke-width="1.500"/><path d="M6 6l4 4" stroke="currentColor" stroke-width="2"/></svg></button>
    <button class="on" aria-label="Object snap"><svg width="16" height="16" viewBox="0 0 16 16"><path d="M3 3h12v12H3z" fill="none" stroke="currentColor" stroke-width="1.400"/><path d="M.5.500h4v4h-4z" fill="#28b414" stroke="#000"/></svg></button>
    <i class="arrow"></i>
    <button aria-label="Lineweight"><svg width="16" height="14" viewBox="0 0 16 14"><path d="M0 1h16M0 5.500h10M0 12.500h16" stroke="currentColor" stroke-width="2"/><path d="M9 5.500h7M0 9h9" stroke="currentColor" stroke-width="3"/></svg></button>
    <button aria-label="3D snap"><svg width="16" height="16" viewBox="0 0 16 16"><use href="#cube"/><path d="M.5 1.500h4v4h-4z" fill="#28b414" stroke="#000"/></svg></button>
    <i class="arrow"></i>
    <button aria-label="Dynamic UCS"><svg width="16" height="16" viewBox="0 0 16 16"><path d="M2 1v13h13M2 14L12 5M8 5l6-3-2 6" fill="none" stroke="currentColor" stroke-width="1.300"/></svg></button>
    <button class="dim" aria-label="Selection filter"><svg width="16" height="16" viewBox="0 0 16 16"><use href="#cube"/></svg></button>
    <i class="arrow"></i>
    <button class="on" aria-label="Annotation visibility"><svg width="16" height="16" viewBox="0 0 16 16"><use href="#compass"/><circle cx="12.500" cy="3" r="2.300" fill="#e6e6e6" stroke="currentColor"/></svg></button>
    <button aria-label="Auto scale"><svg width="16" height="16" viewBox="0 0 16 16"><use href="#compass"/><path d="M14 0l-3 4h3l-2 4" stroke="currentColor" fill="none"/></svg></button>
    <button aria-label="Annotation scale"><svg width="16" height="16" viewBox="0 0 16 16"><use href="#compass"/></svg></button>
    <button>1:1<i class="arrow"></i></button>
    <button aria-label="Workspace"><svg width="14" height="14" viewBox="0 0 14 14"><circle cx="7" cy="7" r="4" fill="none" stroke="currentColor" stroke-width="3"/><circle cx="7" cy="7" r="6" fill="none" stroke="currentColor" stroke-width="2" stroke-dasharray="2.500 2.200"/></svg></button>
    <i class="arrow"></i>
    <button aria-label="Annotation monitor"><svg width="15" height="15" viewBox="0 0 15 15"><path d="M0 7.500h15M7.500 0v15" stroke="currentColor" stroke-width="1.600"/></svg></button>
    <button aria-label="Units"><svg width="6" height="15" viewBox="0 0 6 15"><path d="M1 0v15" stroke="currentColor" stroke-width="2"/><path d="M1 1h5M1 4h4M1 7.500h5M1 11h4M1 14h5" stroke="currentColor" stroke-width="1.500"/></svg></button>
    <button>Decimal</button>
    <i class="arrow"></i>
    <button aria-label="Quick properties"><svg width="16" height="14" viewBox="0 0 16 14"><path d="M1 1h5v5H1zM3 13l3-5 3 5z" fill="none" stroke="currentColor"/><circle cx="12.500" cy="5" r="2.500" fill="none" stroke="currentColor"/></svg></button>
    <button aria-label="Graphics performance"><svg width="16" height="16" viewBox="0 0 16 16"><circle cx="8" cy="8" r="7.500" fill="#1c64b8"/><path d="M5 10l6-5" stroke="#0f468c" stroke-width="2"/></svg></button>
    <button aria-label="Monitor"><svg width="20" height="18" viewBox="0 0 20 18"><path d="M1 1.500h17v15H1z" fill="#f4f4f4" stroke="#333"/><path d="M3 14q3-1 4-7t4 0 5 7" fill="none" stroke="#333"/><path d="M16 10l4 8h-8z" fill="#d8441c"/></svg></button>
    <button aria-label="Files"><svg width="16" height="16" viewBox="0 0 16 16"><path d="M1 1h9l4 4v9H1z" fill="#5d82b4"/><path d="M3 3h6v4H3z" fill="#e8c840"/><path d="M2 9h7v3H2z" fill="#2c4870"/><path d="M6 11l3 4 6-8" fill="none" stroke="#3fc21c" stroke-width="2.500"/></svg></button>
    <button aria-label="Clean screen"><svg width="16" height="12" viewBox="0 0 16 12"><path d="M.7.700h14.600v10.600H.7z" fill="none" stroke="currentColor" stroke-width="1.400"/><path d="M9 3h4v3zM3 6v3h4zM5 8l6-4" fill="currentColor" stroke="currentColor"/></svg></button>
    <button aria-label="Customization"><svg width="14" height="12" viewBox="0 0 14 12"><path d="M0 1h14M0 6h14M0 11h14" stroke="currentColor" stroke-width="2"/></svg></button>
  </div>
</footer>

<svg class="watermark" width="360" height="160" viewBox="0 0 1080 480" aria-label="mostaql.com">
  <g fill="none" stroke="#66696d" stroke-width="32" stroke-linecap="round">
    <path d="M261 184A49 49 0 1 0 311 233V112M311 262H780"/>
    <circle cx="424" cy="213" r="46"/><circle cx="819" cy="233" r="49"/>
    <path d="M548 211L543 262M612 211L608 262M663 199L655 262M713 193L704 262"/>
  </g>
  <g fill="#66696d"><circle cx="400" cy="117" r="21"/><circle cx="450" cy="117" r="21"/><circle cx="522" cy="159" r="21"/><circle cx="571" cy="159" r="21"/></g>
  <text x="540" y="390" text-anchor="middle">mostaql.com</text>
</svg>
</body>
</html>
```

FILE: styles.css
```css
* { box-sizing: border-box; }
body {
  margin: 0;
  min-height: 100vh;
  display: flex;
  flex-direction: column;
  position: relative;
  background: #000;
  color: #2b3038;
  font: 11px/16px "Open Sans", "Noto Sans", sans-serif;
}
button {
  margin: 0;
  padding: 0;
  border: 0;
  background: none;
  color: inherit;
  font: inherit;
  white-space: nowrap;
}
svg { display: block; flex: none; }
.defs { position: absolute; width: 0; height: 0; }

.arrow {
  flex: none;
  width: 0;
  height: 0;
  border: solid transparent;
  border-width: 3px 3px 0;
  border-top-color: #3c4048;
}
.arrow.wide { border-width: 4px 4px 0; }
.arrow.bar { position: relative; }
.arrow.bar::before {
  content: "";
  position: absolute;
  left: -4px;
  top: -7px;
  width: 8px;
  height: 1px;
  background: #3c4048;
}

/* title bar and ribbon tabs */
.top {
  display: grid;
  grid-template-columns: 41px 1fr;
  grid-template-rows: 24px 20px;
  background: #9f9f9f;
}
.app-button {
  grid-row: 1 / 3;
  height: 41px;
  display: flex;
  align-items: center;
  justify-content: center;
  gap: 3px;
  border: 1px solid #111;
  background: linear-gradient(#b4b4b4, #8c8c8c 60%, #757575);
}
.title-bar { display: flex; background: #fff; }
.quick-access {
  display: flex;
  align-items: center;
  gap: 7px;
  width: 214px;
  padding: 0 4px 0 8px;
  background: linear-gradient(#e2e2e2, #b2b2b2);
  border-bottom: 1px solid #777;
  border-right: 1px solid #999;
}
.title { flex: 1; text-align: center; color: #111; line-height: 24px; white-space: nowrap; }
.info-center {
  display: flex;
  align-items: center;
  width: 444px;
  padding-right: 4px;
  background: linear-gradient(#dedede, #b8b8b8);
  border: 1px solid #777;
  border-top-color: #aaa;
}
.info-center button { display: flex; align-items: center; justify-content: center; height: 22px; }
.info-center .expand { width: 13px; }
.info-center input {
  width: 180px;
  height: 22px;
  padding: 0 2px;
  border: 2px solid #111;
  background: #fff;
  font: italic 11px/16px "Open Sans", sans-serif;
}
.info-center input::placeholder { color: #666; opacity: 1; }
.w24 { width: 26px; }
.w32 { width: 36px; }
.ruled { margin-left: 8px; border-left: 1px solid #aaa; }
.info-center .sign { width: 116px; gap: 4px; justify-content: flex-start; padding: 0 4px; font-size: 12px; }
.sign .arrow { margin-left: auto; }
.window-buttons { display: flex; width: 164px; padding-left: 24px; }
.window-buttons button { width: 46px; display: grid; place-items: center; }
.ribbon-tabs { display: flex; align-items: flex-end; gap: 1px; padding-left: 4px; color: #25282c; }
.ribbon-tabs button { height: 17px; padding: 0 10px; line-height: 15px; }
.ribbon-tabs .active { background: linear-gradient(#e9e9e9, #fff); }
.minimize { display: flex; align-items: center; gap: 4px; height: 17px; margin-left: 20px; }

/* ribbon */
.ribbon {
  display: flex;
  height: 99px;
  padding-left: 2px;
  background: linear-gradient(#e6e6e6, #989898);
  border-bottom: 1px solid #f4f4f4;
}
.panel {
  display: flex;
  flex-direction: column;
  flex: none;
  background: #fdfdfd;
  border-right: 1px solid #b2b2b2;
}
.panel .body { display: flex; flex: 1; padding: 5px 2px 0; }
.panel footer {
  display: flex;
  align-items: center;
  justify-content: center;
  gap: 7px;
  height: 18px;
  margin: 0 1px;
  position: relative;
  background: #eee;
  border: solid #d4d4d4;
  border-width: 1px 0;
}
.launcher { position: absolute; right: 5px; top: 6px; }
.p-draw { width: 224px; }
.p-modify { width: 250px; }
.p-annotation { width: 189px; }
.p-layers { width: 273px; }
.p-block { width: 161px; }
.p-properties { width: 265px; }
.p-groups { width: 69px; }
.p-utilities { width: 97px; }
.p-clipboard { width: 80px; }
.p-view { width: 62px; }
.panel.p-view footer { justify-content: flex-start; padding-left: 5px; }

.big { display: flex; flex-direction: column; align-items: center; gap: 4px; padding-top: 2px; height: 72px; line-height: 15px; }
.big .arrow { margin-top: -1px; }
.w40 { width: 40px; }
.w44 { width: 44px; }
.w48 { width: 48px; }
.w60 { width: 60px; }
.w64 { width: 64px; }
.p-draw .w40 { width: 38px; }
.rows { display: grid; grid-template-rows: repeat(3, 24px); align-items: center; }
.rows.w72 { width: 71px; }
.rows.w76 { width: 76px; }
.small { display: flex; align-items: center; gap: 5px; height: 22px; padding: 0 2px; }
.p-draw .rows .small { gap: 9px; padding: 0 0 0 5px; }
.p-modify .body { padding-left: 4px; }
.p-modify .arrow { margin-left: 6px; }
.p-annotation .rows { padding-left: 2px; }
.p-annotation .arrow { margin-left: 4px; }
.p-annotation .big .arrow { margin-left: 0; }
.p-block .arrow { margin-left: 2px; }
.icon-row { display: flex; height: 24px; align-items: center; }
.icon-row button { width: 24px; display: flex; justify-content: center; }
.icon-row .small { width: auto; padding: 0 4px; gap: 5px; }

.combo {
  position: relative;
  display: flex;
  align-items: center;
  height: 22px;
  border: 1px solid #c4c4c4;
  background: linear-gradient(#f0f0f0, #fdfdfd);
}
.combo::after {
  content: "";
  position: absolute;
  right: 2px;
  top: 8px;
  border: solid transparent;
  border-width: 4px 4px 0;
  border-top-color: #333;
}
.combo select {
  flex: 1;
  height: 20px;
  padding: 0;
  border: 0;
  appearance: none;
  background: none;
  color: #2b3038;
  font: inherit;
}
.layer-combo { width: 208px; gap: 4px; padding-left: 4px; }
.combos { width: 180px; }
.color-combo .swatch { width: 16px; height: 16px; margin: 0 8px 0 12px; border: 1px solid #999; background: #fff; }
.color-combo select { color: #000; }
.line-combo .line { width: 60px; height: 1px; margin-left: 8px; background: #000; }
.p-properties .icons { width: 20px; }
.p-groups .body, .p-utilities .body { padding-right: 0; }
.p-groups .small { width: 24px; justify-content: center; }
.pressed { border: 1px solid #1a6fc4; background: #b9e0f8; }
.p-utilities .small { padding: 0 7px; }
.p-clipboard .small { padding: 0 6px; }

/* drawing file tabs */
.file-tabs {
  display: flex;
  align-items: flex-end;
  height: 30px;
  padding-left: 15px;
  background: #b2b2b2;
  border-bottom: 4px solid #efefef;
}
.file-tabs button {
  position: relative;
  z-index: 0;
  display: flex;
  align-items: center;
  justify-content: space-between;
  height: 22px;
  margin-right: -6px;
  padding: 0 17px 0 11px;
  color: #6a6d70;
}
.file-tabs button::before {
  content: "";
  position: absolute;
  inset: 0;
  z-index: -1;
  background: linear-gradient(#dcdcdc, #cecece);
  clip-path: polygon(0 100%, 5px 90%, 8px 15%, 13px 0, calc(100% - 14px) 0, calc(100% - 9px) 15%, calc(100% - 4px) 90%, 100% 100%);
}
.file-tabs .active { color: #16181b; }
.file-tabs .active::before { background: linear-gradient(#fff, #efefef); }
.file-tabs .tab-start { width: 135px; padding-left: 17px; }
.tab-long { width: 160px; }
.tab { width: 129px; }
.x { font: bold 10px/16px "DejaVu Sans", sans-serif; color: #888; }
.file-tabs .plus {
  width: 22px;
  height: 15px;
  margin: 0 0 3px 7px;
  padding: 0;
  justify-content: center;
  color: #333;
  font: bold 14px/15px "Open Sans", sans-serif;
}
.file-tabs .plus::before { clip-path: none; border-radius: 2px 8px 2px 6px; background: #e2e2e2; }

/* drawing area */
.viewport { position: relative; flex: 1; min-height: 640px; margin-right: 8px; background: #212830; overflow: hidden; }
.scene { position: absolute; inset: 0; width: 100%; height: 100%; }
.view-label { position: absolute; left: 3px; top: 6px; color: #e4e6e8; }
.view-buttons { position: absolute; right: 10px; top: 9px; display: flex; gap: 8px; }
.view-cube { position: absolute; right: 2px; top: 27px; }
.cube-text { font-family: "Open Sans", sans-serif; font-weight: 700; }
.ucs-name {
  position: absolute;
  right: 49px;
  top: 193px;
  display: flex;
  align-items: center;
  justify-content: center;
  gap: 6px;
  width: 68px;
  height: 18px;
  border-radius: 4px;
  background: #97999b;
  border: 1px solid #808386;
  color: #3f4448;
  font-size: 10px;
}
.nav-bar { position: absolute; right: 4px; top: 236px; border-radius: 4px; background: #5c6165; }
.ucs-icon { position: absolute; left: 0; bottom: 0; }
.history { position: absolute; left: 63px; bottom: 2px; display: grid; gap: 5px; }
.history span {
  padding: 0 1px;
  border-radius: 2px;
  background: #4f5458;
  color: #f2f2f2;
  font: 12px/15px "Liberation Mono", monospace;
}
.history span:nth-child(1) { color: #b4b6b8; }
.history span:nth-child(2) { color: #d4d6d8; }

/* command line */
.command-line { display: flex; height: 30px; margin: 0 4px 0 3px; border: 1px solid #55585b; background: #bcbdbf; }
.tools { display: flex; align-items: center; gap: 7px; width: 53px; padding-left: 3px; background: linear-gradient(#6b6e71, #3e4145); }
.prompt { display: flex; flex: 1; align-items: center; gap: 4px; padding: 0 3px 0 5px; }
.prompt input {
  flex: 1;
  padding: 2px 0 0;
  margin-left: 4px;
  border: 0;
  background: none;
  font: italic 12px/16px "Liberation Mono", monospace;
}
.prompt input::placeholder { color: #6d7074; opacity: 1; }

/* layout tabs and status bar */
.bottom { display: flex; height: 30px; background: #b2b2b2; border-bottom: 2px solid #e6e6e6; }
.layout-tabs { display: flex; flex: 1; padding-left: 11px; }
.layout-tabs button { position: relative; z-index: 0; width: 65px; height: 18px; color: #6a6d70; }
.layout-tabs button::before {
  content: "";
  position: absolute;
  inset: 0;
  z-index: -1;
  background: #dcdcdc;
  clip-path: polygon(0 0, 100% 0, calc(100% - 7px) 85%, calc(100% - 10px) 100%, 10px 100%, 7px 85%);
}
.layout-tabs .active { width: 59px; color: #000; font-weight: 700; }
.layout-tabs .active::before { background: #fff; }
.layout-tabs .plus { width: 24px; height: 16px; margin-left: 3px; font: bold 14px/16px "Open Sans", sans-serif; color: #333; }
.layout-tabs .plus::before { clip-path: none; border-radius: 6px 2px 8px 2px; }
.status {
  display: grid;
  grid-template-columns: 48px 28px 20px 18px 28px 26px 18px 20px 20px 18px 24px 24px 16px 24px 26px 14px 28px 22px 16px 28px 24px 22px 34px 28px 12px 30px 24px 54px 22px 22px 34px 24px 22px 30px 24px;
  align-items: center;
  justify-items: center;
  padding-left: 1px;
  background: #e6e6e6;
  color: #555;
}
.status button { display: flex; align-items: center; gap: 4px; }
.status button:not([aria-label]) { color: #111; font-size: 12px; }
.status .on { color: #3d9be9; }
.status .dim { color: #9a9a9a; }
.status .arrow { border-width: 5px 4px 0; border-top-color: #111; }

.watermark { position: absolute; left: calc(50% - 180px); bottom: 0; pointer-events: none; }
.watermark text { fill: #c4c5c7; fill-opacity: .4; font: 112px "Lato", sans-serif; }
```
